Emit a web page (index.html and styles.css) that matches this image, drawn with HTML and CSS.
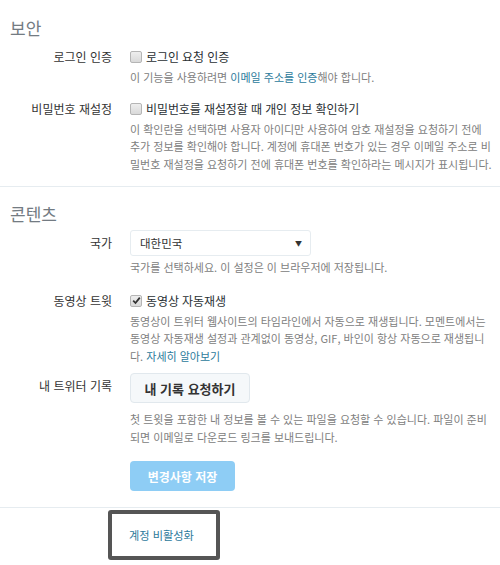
FILE: index.html
```html
<!DOCTYPE html>
<html lang="ko">
<head>
  <meta charset="UTF-8">
  <meta name="viewport" content="width=device-width, initial-scale=1.0">
  <title>계정 설정</title>
  <link rel="stylesheet" href="styles.css">
</head>
<body>
  <section class="section">
    <h2 class="section-title">보안</h2>

    <div class="row">
      <div class="label">로그인 인증</div>
      <div class="control">
        <label class="check"><span class="box"></span>로그인 요청 인증</label>
        <p class="desc">이 기능을 사용하려면 <a href="#">이메일 주소를 인증</a>해야 합니다.</p>
      </div>
    </div>

    <div class="row">
      <div class="label">비밀번호 재설정</div>
      <div class="control">
        <label class="check"><span class="box"></span>비밀번호를 재설정할 때 개인 정보 확인하기</label>
        <p class="desc">이 확인란을 선택하면 사용자 아이디만 사용하여 암호 재설정을 요청하기 전에 추가 정보를 확인해야 합니다. 계정에 휴대폰 번호가 있는 경우 이메일 주소로 비밀번호 재설정을 요청하기 전에 휴대폰 번호를 확인하라는 메시지가 표시됩니다.</p>
      </div>
    </div>
  </section>

  <section class="section">
    <h2 class="section-title">콘텐츠</h2>

    <div class="row row-center">
      <div class="label">국가</div>
      <div class="control">
        <div class="select"><span>대한민국</span><span class="arrow">▼</span></div>
        <p class="desc">국가를 선택하세요. 이 설정은 이 브라우저에 저장됩니다.</p>
      </div>
    </div>

    <div class="row row-tight">
      <div class="label">동영상 트윗</div>
      <div class="control">
        <label class="check"><span class="box checked"><svg width="9" height="9" viewBox="0 0 9 9"><path d="M1.2 4.6 L3.5 7 L7.8 1.6" fill="none" stroke="#333" stroke-width="1.8"/></svg></span>동영상 자동재생</label>
        <p class="desc">동영상이 트위터 웹사이트의 타임라인에서 자동으로 재생됩니다. 모멘트에서는 동영상 자동재생 설정과 관계없이 동영상, GIF, 바인이 항상 자동으로 재생됩니다. <a href="#">자세히 알아보기</a></p>
      </div>
    </div>

    <div class="row row-btn">
      <div class="label">내 트위터 기록</div>
      <div class="control">
        <button class="btn">내 기록 요청하기</button>
        <p class="desc">첫 트윗을 포함한 내 정보를 볼 수 있는 파일을 요청할 수 있습니다. 파일이 준비되면 이메일로 다운로드 링크를 보내드립니다.</p>
      </div>
    </div>

    <div class="row save-row">
      <div></div>
      <div class="control">
        <button class="btn-save" disabled>변경사항 저장</button>
      </div>
    </div>
  </section>

  <div class="deactivate">
    <a href="#" class="deactivate-link">계정 비활성화</a>
  </div>
</body>
</html>
```

FILE: styles.css
```css
body {
  margin: 0;
  font-family: "Noto Sans CJK KR", "Noto Sans", sans-serif;
  background-color: #fff;
  color: #333;
}
a {
  color: #2b7a9b;
  text-decoration: none;
}
.section {
  padding: 16px 0 13px;
  border-bottom: 1px solid #e6ecf0;
}
.section + .section {
  padding-top: 15px;
  padding-bottom: 16px;
}
.section-title {
  margin: 0 0 8px 10px;
  font-size: 17px;
  line-height: 24px;
  font-weight: normal;
  color: #737b82;
}
.section + .section .section-title {
  margin-bottom: 4px;
}
.row {
  display: grid;
  grid-template-columns: 112px 1fr;
  column-gap: 18px;
  margin-bottom: 13px;
  padding-right: 6px;
}
.section + .section .row {
  margin-bottom: 15px;
}
.section + .section .row-tight {
  margin-bottom: 8px;
}
.row:last-child,
.section + .section .row:last-child {
  margin-bottom: 0;
}
.label {
  text-align: right;
  font-size: 12px;
  line-height: 18px;
  color: #333;
}
.row-center .label {
  line-height: 26px;
}
.row-btn .label {
  line-height: 26px;
}
.check {
  display: flex;
  align-items: center;
  font-size: 12px;
  letter-spacing: -0.1px;
  line-height: 18px;
  color: #292f33;
}
.box {
  display: inline-flex;
  align-items: center;
  justify-content: center;
  width: 10px;
  height: 10px;
  margin-right: 4px;
  border: 1px solid #b5b5b5;
  border-radius: 2px;
  background: linear-gradient(#eee, #d9d9d9);
}
.desc {
  margin: 3px 0 0;
  font-size: 11px;
  line-height: 17.5px;
  color: #808080;
}
.select {
  display: flex;
  justify-content: space-between;
  align-items: center;
  width: 162px;
  height: 24px;
  padding: 0 8px 0 9px;
  border: 1px solid #e6ecf0;
  border-radius: 3px;
  font-size: 11.5px;
  color: #333;
}
.arrow {
  font-size: 7px;
}
.btn {
  display: block;
  width: 120px;
  height: 30px;
  padding: 0;
  border: 1px solid #e1e8ed;
  border-radius: 4px;
  background-color: #f5f8fa;
  font-family: inherit;
  font-size: 13px;
  font-weight: bold;
  color: #333;
}
.row-btn .desc {
  margin-top: 8px;
}
.save-row {
  margin-top: 13px;
}
.btn-save {
  display: block;
  width: 105px;
  height: 30px;
  padding: 0;
  border: none;
  border-radius: 4px;
  background-color: #8ecdf5;
  font-family: inherit;
  font-size: 12px;
  font-weight: bold;
  color: #fff;
}
.deactivate {
  display: flex;
  align-items: center;
  width: 87px;
  height: 42px;
  margin: 2px 0 0 108px;
  padding-left: 17px;
  border: 4px solid #555;
  border-radius: 3px;
}
.deactivate-link {
  font-size: 11.2px;
}
```
